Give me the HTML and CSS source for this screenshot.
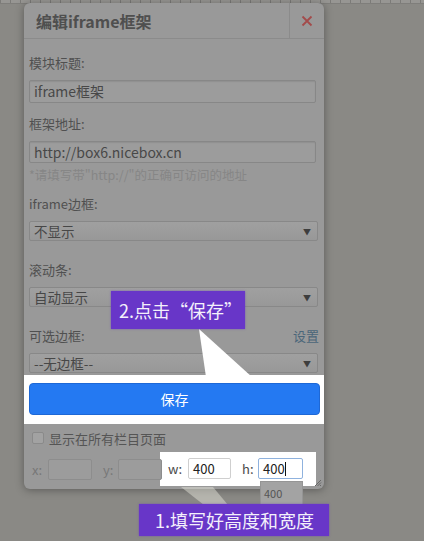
FILE: index.html
```html
<!DOCTYPE html>
<html lang="zh-CN">
<head>
<meta charset="utf-8">
<title>编辑iframe框架</title>
<link rel="stylesheet" href="styles.css">
</head>
<body>
<div class="page">
  <div class="ruler"></div>
  <div class="dialog">
    <div class="dlg-head">
      <div class="dlg-title">编辑iframe框架</div>
      <div class="dlg-close">
        <svg width="12" height="12" viewBox="0 0 12 12"><path d="M1.5 1.5 L10.5 10.5 M10.5 1.5 L1.5 10.5" stroke="#a34b4b" stroke-width="1.8" fill="none"/></svg>
      </div>
    </div>
    <div class="dlg-body">
      <div class="lbl lbl-first">模块标题:</div>
      <div class="field field-title">iframe框架</div>
      <div class="lbl">框架地址:</div>
      <div class="field field-url">http://box6.nicebox.cn</div>
      <div class="hint">*请填写带"http://"的正确可访问的地址</div>
      <div class="lbl">iframe边框:</div>
      <div class="select"><span>不显示</span><span class="arrow">▼</span></div>
      <div class="lbl lbl-gap">滚动条:</div>
      <div class="select"><span>自动显示</span><span class="arrow">▼</span></div>
      <div class="lbl lbl-gap lbl-row"><span>可选边框:</span><span class="link">设置</span></div>
      <div class="select"><span>--无边框--</span><span class="arrow">▼</span></div>
    </div>
    <div class="spot-save">
      <div class="btn-save">保存</div>
    </div>
    <div class="check-row">
      <span class="checkbox"></span><span>显示在所有栏目页面</span>
    </div>
    <div class="pos-row">
      <span class="pos-lbl pos-x">x:</span><span class="small-in"></span>
      <span class="pos-lbl pos-y">y:</span><span class="small-in"></span>
      <div class="spot-size">
        <span class="pos-lbl pos-w">w:</span><span class="small-in lit">400</span>
        <span class="pos-lbl pos-h">h:</span>
        <span class="small-in lit focus">400<span class="caret"></span>
          <span class="suggest">400</span>
        </span>
      </div>
    </div>
    <svg class="grip" width="8" height="8" viewBox="0 0 8 8"><path d="M7 1 L1 7 M7 3.5 L3.5 7 M7 6 L6 7" stroke="#666" stroke-width="1"/></svg>
  </div>

  <svg class="pointers" width="424" height="541" viewBox="0 0 424 541">
    <polygon points="199,329 206,377 252,377" fill="#ffffff"/>
    <polygon points="181,487 213,487 228,505 204,505" fill="rgba(235,235,225,0.45)"/>
  </svg>
  <div class="callout callout-save">2.点击“保存”</div>
  <div class="callout callout-size">1.填写好高度和宽度</div>
</div>
</body>
</html>
```

FILE: styles.css
```css
* { box-sizing: border-box; }
html, body { margin: 0; padding: 0; }
body {
  background: #8a8985;
  font-family: "Noto Sans CJK SC", "Noto Sans", sans-serif;
  color: #4e4e4e;
}
.page {
  position: relative;
  width: 424px;
  height: 541px;
  overflow: hidden;
  background: #8a8985;
}
.ruler {
  height: 4px;
  background:
    repeating-linear-gradient(90deg, #7c7b78 0 1px, transparent 1px 10px),
    #979693;
  border-bottom: 1px solid #7f7e7b;
}
.dialog {
  position: relative;
  margin: -1px 0 0 24px;
  width: 300px;
  height: 486px;
  background: #999999;
  border-radius: 6px;
  box-shadow: 0 1px 8px rgba(0,0,0,0.35);
}
.dlg-head {
  display: flex;
  height: 36px;
  border-bottom: 1px solid #8b8b8b;
}
.dlg-title {
  flex: 1;
  padding-left: 12px;
  font-size: 16px;
  font-weight: 700;
  line-height: 36px;
  color: #4f4f4f;
}
.dlg-close {
  width: 35px;
  border-left: 1px solid #8b8b8b;
  display: flex;
  align-items: center;
  justify-content: center;
}
.dlg-body {
  padding: 14px 0 0 5px;
}
.lbl {
  font-size: 13px;
  line-height: 20px;
  height: 20px;
  margin-top: 11px;
  color: #505050;
}
.lbl-first { margin-top: 0; }
.lbl-gap { margin-top: 19px; }
.lbl-row {
  display: flex;
  justify-content: space-between;
  width: 290px;
}
.link { color: #4b6679; }
.field {
  margin-top: 7px;
  width: 287px;
  height: 23px;
  border: 1px solid #878787;
  border-radius: 2px;
  background: #9c9c9c;
  box-shadow: inset 0 1px 1px rgba(0,0,0,0.08);
  padding-left: 4px;
  font-size: 14px;
  line-height: 21px;
  color: #484848;
}
.field-url { height: 22px; line-height: 20px; }
.hint {
  margin-top: 4px;
  font-size: 12.5px;
  line-height: 16px;
  color: #868686;
}
.select {
  margin-top: 7px;
  width: 289px;
  height: 20px;
  border: 1px solid #888888;
  border-radius: 2px;
  background: linear-gradient(#a0a0a0, #989898);
  display: flex;
  justify-content: space-between;
  align-items: center;
  padding: 0 6px 0 4px;
  font-size: 13.5px;
  color: #474747;
}
.arrow { font-size: 8px; color: #3e3e3e; }
.spot-save {
  margin-top: 2px;
  background: #ffffff;
  padding: 8px 4px 9px 5px;
}
.btn-save {
  height: 32px;
  background: #2479f2;
  border: 1px solid #1e68d6;
  border-radius: 4px;
  color: #ffffff;
  font-size: 14px;
  line-height: 30px;
  text-align: center;
}
.check-row {
  margin-top: 4px;
  height: 20px;
  display: flex;
  align-items: center;
  padding-left: 8px;
  font-size: 13px;
  color: #555555;
}
.checkbox {
  width: 12px;
  height: 12px;
  border: 1px solid #8a8a8a;
  border-radius: 2px;
  background: #a2a2a2;
  margin-right: 5px;
}
.pos-row {
  margin-top: 4px;
  display: flex;
  align-items: center;
  padding-left: 8px;
  font-size: 13px;
  color: #777777;
}
.pos-lbl { display: inline-block; }
.pos-x { width: 16px; }
.pos-y { width: 15px; margin-left: 11px; }
.pos-w { width: 20px; color: #4a4a4a; }
.pos-h { width: 16px; margin-left: 11px; color: #4a4a4a; }
.small-in {
  position: relative;
  display: inline-block;
  width: 44px;
  height: 21px;
  border: 1px solid #8d8d8d;
  border-radius: 2px;
  background: #9c9c9c;
  font-size: 13px;
  line-height: 19px;
  padding-left: 4px;
  color: #333;
}
.spot-size {
  margin-left: -2px;
  background: #ffffff;
  display: flex;
  align-items: center;
  padding: 6px 13px 7px 8px;
}
.small-in.lit {
  width: 43px;
  background: #ffffff;
  border-color: #cfcfcf;
  color: #222;
}
.small-in.focus {
  width: 45px;
  border-color: #8fb2de;
}
.caret {
  display: inline-block;
  width: 1px;
  height: 14px;
  background: #111;
  vertical-align: -2px;
}
.suggest {
  position: absolute;
  left: 1px;
  top: 22px;
  width: 43px;
  height: 24px;
  background: #a3a3a3;
  border: 1px solid #959595;
  font-size: 11px;
  line-height: 22px;
  padding-left: 3px;
  color: #555;
}
.grip {
  position: absolute;
  right: 2px;
  bottom: 2px;
}
.pointers {
  position: absolute;
  left: 0;
  top: 0;
  pointer-events: none;
}
.callout {
  position: absolute;
  background: #6836c8;
  color: #f4f0fb;
  font-size: 18px;
  line-height: 32px;
  white-space: nowrap;
  box-shadow: 0 0 2px rgba(100,50,200,0.6);
}
.callout-save {
  left: 111px;
  top: 291px;
  width: 134px;
  height: 38px;
  line-height: 38px;
  padding-left: 8px;
}
.callout-size {
  left: 139px;
  top: 504px;
  width: 190px;
  height: 32px;
  padding-left: 16px;
}
```
